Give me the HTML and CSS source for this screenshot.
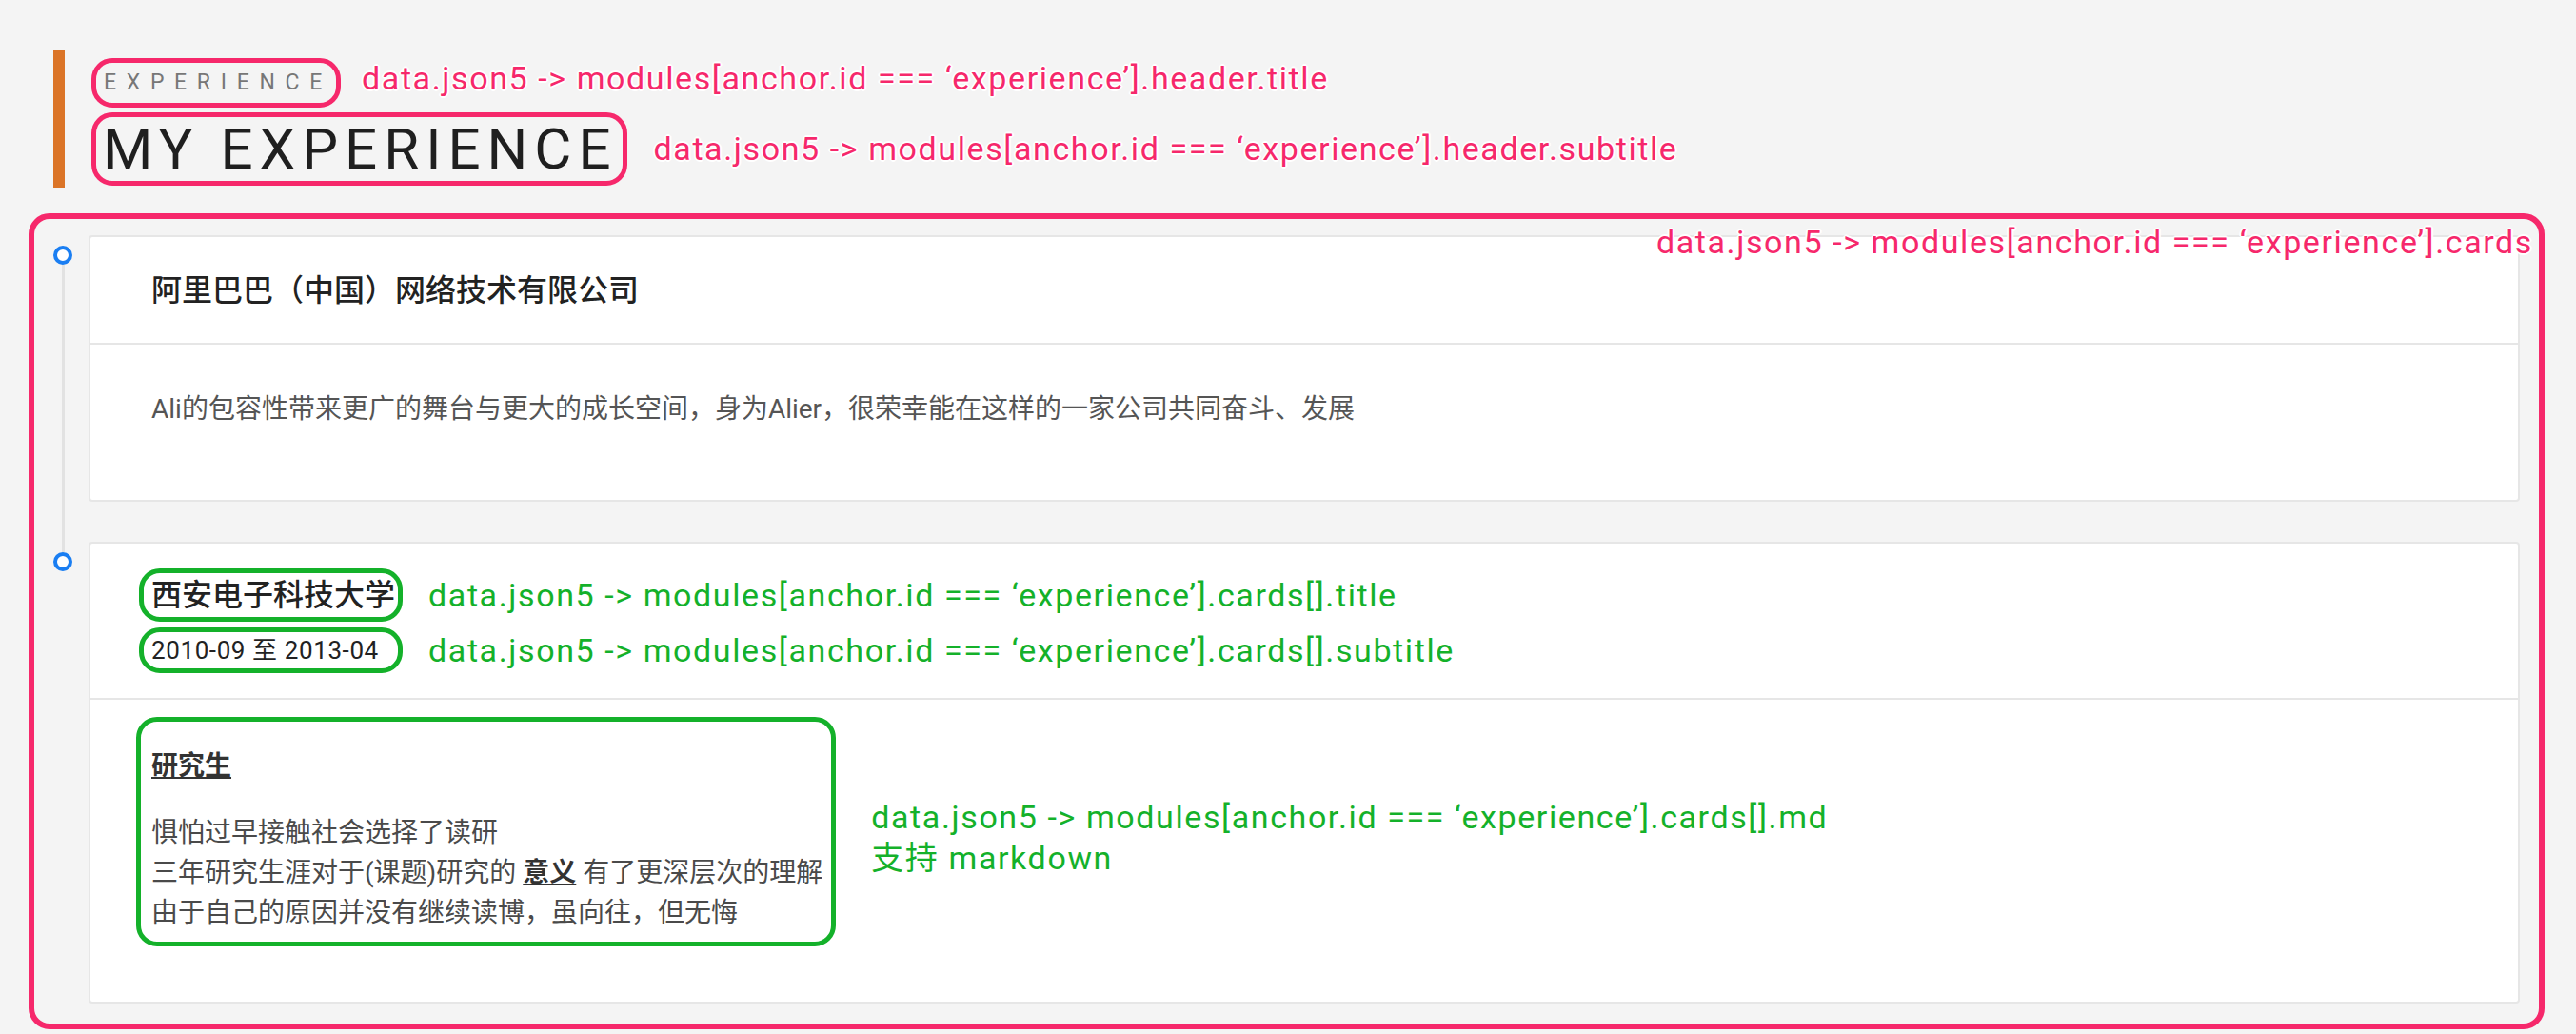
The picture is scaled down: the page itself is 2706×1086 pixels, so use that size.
FILE: index.html
```html
<!DOCTYPE html>
<html lang="zh-CN">
<head>
<meta charset="utf-8">
<title>Experience</title>
<link rel="stylesheet" href="styles.css">
</head>
<body>
<div class="page">
  <header class="module-header">
    <div class="hdr-row hdr-row-top">
      <div class="ann-box ann-pink box-title"><div class="module-title">EXPERIENCE</div></div>
      <div class="ann-label ann-pink-text label-title">data.json5 -&gt; modules[anchor.id === ‘experience’].header.title</div>
    </div>
    <div class="hdr-row">
      <div class="ann-box ann-pink box-subtitle"><h2 class="module-subtitle">MY EXPERIENCE</h2></div>
      <div class="ann-label ann-pink-text label-subtitle">data.json5 -&gt; modules[anchor.id === ‘experience’].header.subtitle</div>
    </div>
  </header>

  <section class="ann-region">
    <div class="ann-label ann-pink-text label-cards">data.json5 -&gt; modules[anchor.id === ‘experience’].cards</div>
    <ol class="timeline">
      <li class="timeline-item">
        <span class="timeline-dot"></span>
        <article class="card">
          <div class="card-header">
            <h3 class="card-title">阿里巴巴（中国）网络技术有限公司</h3>
          </div>
          <div class="card-body">
            <p>Ali的包容性带来更广的舞台与更大的成长空间，身为Alier，很荣幸能在这样的一家公司共同奋斗、发展</p>
          </div>
        </article>
      </li>
      <li class="timeline-item">
        <span class="timeline-dot"></span>
        <article class="card">
          <div class="card-header card-header-annotated">
            <div class="ann-box ann-green box-card-title"><h3 class="card-title">西安电子科技大学</h3></div>
            <div class="ann-label ann-green-text">data.json5 -&gt; modules[anchor.id === ‘experience’].cards[].title</div>
            <div class="ann-box ann-green box-card-subtitle"><div class="card-subtitle">2010-09 至 2013-04</div></div>
            <div class="ann-label ann-green-text">data.json5 -&gt; modules[anchor.id === ‘experience’].cards[].subtitle</div>
          </div>
          <div class="card-body card-body-annotated">
            <div class="ann-box ann-green md-box">
              <p><strong><u>研究生</u></strong></p>
              <p>惧怕过早接触社会选择了读研<br>三年研究生涯对于(课题)研究的 <strong><u>意义</u></strong> 有了更深层次的理解<br>由于自己的原因并没有继续读博，虽向往，但无悔</p>
            </div>
            <div class="ann-label ann-green-text label-md">data.json5 -&gt; modules[anchor.id === ‘experience’].cards[].md<br>支持 markdown</div>
          </div>
        </article>
      </li>
    </ol>
  </section>
</div>
</body>
</html>
```

FILE: styles.css
```css
* { box-sizing: border-box; }

body {
  margin: 0;
  background: #f4f4f4;
  font-family: Roboto, "Noto Sans CJK SC", sans-serif;
  color: #222;
}

.page {
  padding-top: 52px;
}

/* ---------- module header ---------- */
.module-header {
  margin-left: 56px;
  border-left: 12px solid #db7427;
  padding: 9px 0 2px 28px;
  display: flex;
  flex-direction: column;
  gap: 5px;
}

.hdr-row {
  display: flex;
  align-items: center;
  gap: 22px;
}

.hdr-row-top {
  align-items: flex-start;
}

.module-title {
  font-size: 23px;
  line-height: 42px;
  letter-spacing: 10.7px;
  color: #777;
}

.module-subtitle {
  margin: 0;
  font-size: 60px;
  line-height: 67px;
  font-weight: 400;
  letter-spacing: 7px;
  color: #1f1f1f;
}

/* ---------- annotations ---------- */
.ann-box {
  border: 5px solid;
  border-radius: 22px;
}

.ann-pink { border-color: #f6286b; }
.ann-green { border-color: #14b12a; }

.box-title { padding: 0 4px 0 8px; }
.box-subtitle { padding: 0 5px 0 7px; }

.ann-label {
  font-family: Roboto, "Noto Sans CJK SC", sans-serif;
  font-size: 34px;
  line-height: 43px;
  letter-spacing: 1.6px;
  white-space: nowrap;
  text-shadow:
    2px 0 0 #fff, -2px 0 0 #fff, 0 2px 0 #fff, 0 -2px 0 #fff,
    1px 1px 0 #fff, -1px -1px 0 #fff, 1px -1px 0 #fff, -1px 1px 0 #fff;
}

.ann-pink-text { color: #f6286b; }
.ann-green-text { color: #14b12a; }

.label-title { margin-top: 0; }
.label-subtitle { margin-left: 6px; }

/* ---------- cards region ---------- */
.ann-region {
  position: relative;
  margin: 27px 33px 0 30px;
  border: 6px solid #f6286b;
  border-radius: 22px;
  padding: 17px 20px 21px 0;
}

.label-cards {
  position: absolute;
  top: 3px;
  right: 6px;
  z-index: 2;
}

.timeline {
  list-style: none;
  margin: 0;
  padding: 0;
  display: flex;
  flex-direction: column;
  gap: 42px;
}

.timeline-item {
  position: relative;
  display: grid;
  grid-template-columns: 57px 1fr;
}

.timeline-item:not(:last-child)::after {
  content: "";
  position: absolute;
  left: 29px;
  width: 3px;
  top: 31px;
  bottom: -53px;
  background: #e2e2e2;
}

.timeline-dot {
  width: 20px;
  height: 20px;
  margin: 11px 0 0 20px;
  border: 4px solid #1a7ef2;
  border-radius: 50%;
  background: #fff;
}

.card {
  background: #fff;
  border: 2px solid #e6e6e6;
  border-radius: 4px;
}

.card-header {
  padding: 32px 64px 31px;
  border-bottom: 2px solid #e6e6e6;
}

.card-header-annotated {
  padding: 26px 64px;
  display: grid;
  grid-template-columns: max-content 1fr;
  column-gap: 27px;
  row-gap: 6px;
  align-items: center;
  justify-items: start;
}

.card-header-annotated .ann-box {
  justify-self: stretch;
}

.card-title {
  margin: 0;
  font-size: 32px;
  line-height: 48px;
  font-weight: 500;
  color: #222;
}

.card-subtitle {
  font-size: 26px;
  line-height: 38px;
  letter-spacing: 0.6px;
  color: #222;
}

.box-card-title {
  margin-left: -13px;
  padding: 0 3px 0 8px;
}

.box-card-title .card-title {
  line-height: 46px;
}

.box-card-subtitle {
  margin-left: -13px;
  padding: 0 0 0 8px;
}

.card-body {
  padding: 47px 64px 46px;
  font-size: 28px;
  line-height: 42px;
  color: #555;
}

.card-body p {
  margin: 0 0 28px;
}

.card-body strong {
  color: #333;
}

.card-body-annotated {
  display: flex;
  align-items: flex-start;
  gap: 37px;
}

.md-box {
  flex: none;
  margin: -29px 0 12px -16px;
  padding: 26px 9px 9px 11px;
  color: #4a4a4a;
}

.md-box p:last-child {
  margin-bottom: 0;
}

.label-md {
  margin-top: 55px;
}
```
